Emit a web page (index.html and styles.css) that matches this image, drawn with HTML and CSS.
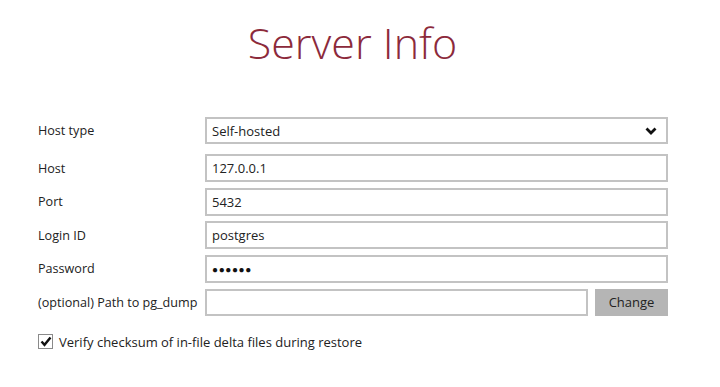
FILE: index.html
```html
<!DOCTYPE html>
<html>
<head>
<meta charset="utf-8">
<link rel="stylesheet" href="styles.css">
</head>
<body>
<div class="page">
  <h1 class="title">Server Info</h1>
  <form class="form">
    <div class="row row-first">
      <label class="label">Host type</label>
      <div class="field select">
        <span>Self-hosted</span>
        <svg class="chev" width="12" height="8" viewBox="0 0 12 8"><path d="M1.5 1.5 L6 6 L10.5 1.5" fill="none" stroke="#111" stroke-width="2.8"/></svg>
      </div>
    </div>
    <div class="row row-host">
      <label class="label">Host</label>
      <div class="field">127.0.0.1</div>
    </div>
    <div class="row">
      <label class="label">Port</label>
      <div class="field">5432</div>
    </div>
    <div class="row">
      <label class="label">Login ID</label>
      <div class="field">postgres</div>
    </div>
    <div class="row">
      <label class="label">Password</label>
      <div class="field pwd">&#9679;&#9679;&#9679;&#9679;&#9679;&#9679;</div>
    </div>
    <div class="row">
      <label class="label">(optional) Path to pg_dump</label>
      <div class="pathwrap">
        <div class="field path"></div>
        <button type="button" class="btn">Change</button>
      </div>
    </div>
    <div class="check">
      <span class="box"><svg width="12" height="11" viewBox="0 0 12 11"><path d="M1.5 5.5 L4.5 8.8 L10.5 1.5" fill="none" stroke="#111" stroke-width="2.4"/></svg></span>
      <span>Verify checksum of in-file delta files during restore</span>
    </div>
  </form>
</div>
</body>
</html>
```
FILE: styles.css
```css
html, body {
  margin: 0;
  padding: 0;
  background: #ffffff;
}
body {
  font-family: "Open Sans", "Noto Sans", sans-serif;
  font-size: 13px;
  color: #222;
}
.page {
  width: 720px;
  height: 387px;
  overflow: hidden;
}
.title {
  margin: 0;
  padding-top: 15px;
  padding-right: 15px;
  text-align: center;
  font-weight: 300;
  font-size: 43px;
  line-height: 56px;
  color: #8c2a3b;
}
.form {
  padding: 46px 52px 0 38px;
  display: flex;
  flex-direction: column;
  gap: 5.5px;
}
.row {
  display: flex;
  align-items: center;
  height: 28px;
}
.row-first {
  height: 27px;
}
.row-host {
  margin-top: 4.5px;
}
.label {
  width: 167px;
  flex: none;
  font-size: 12.6px;
  color: #222;
}
.field {
  flex: 1;
  box-sizing: border-box;
  height: 28px;
  border: 2px solid #c3c3c3;
  background: #fff;
  padding: 0 5px;
  display: flex;
  align-items: center;
  color: #222;
}
.select {
  justify-content: space-between;
  padding-right: 9px;
  height: 27px;
}
.chev {
  display: block;
}
.pwd {
  font-size: 10px;
  letter-spacing: 0.6px;
  color: #111;
}
.pathwrap {
  flex: 1;
  display: flex;
  gap: 7px;
  height: 27px;
}
.path {
  height: 27px;
}
.btn {
  width: 73px;
  flex: none;
  height: 27px;
  border: none;
  background: #b5b5b5;
  font-family: "Open Sans", "Noto Sans", sans-serif;
  font-size: 13px;
  color: #222;
  padding: 0;
}
.check {
  margin-top: 11px;
  display: flex;
  align-items: center;
  gap: 6px;
  color: #222;
}
.box {
  box-sizing: border-box;
  width: 15px;
  height: 15px;
  border: 1px solid #8a8a8a;
  display: flex;
  align-items: center;
  justify-content: center;
}
.box svg {
  display: block;
}
```
